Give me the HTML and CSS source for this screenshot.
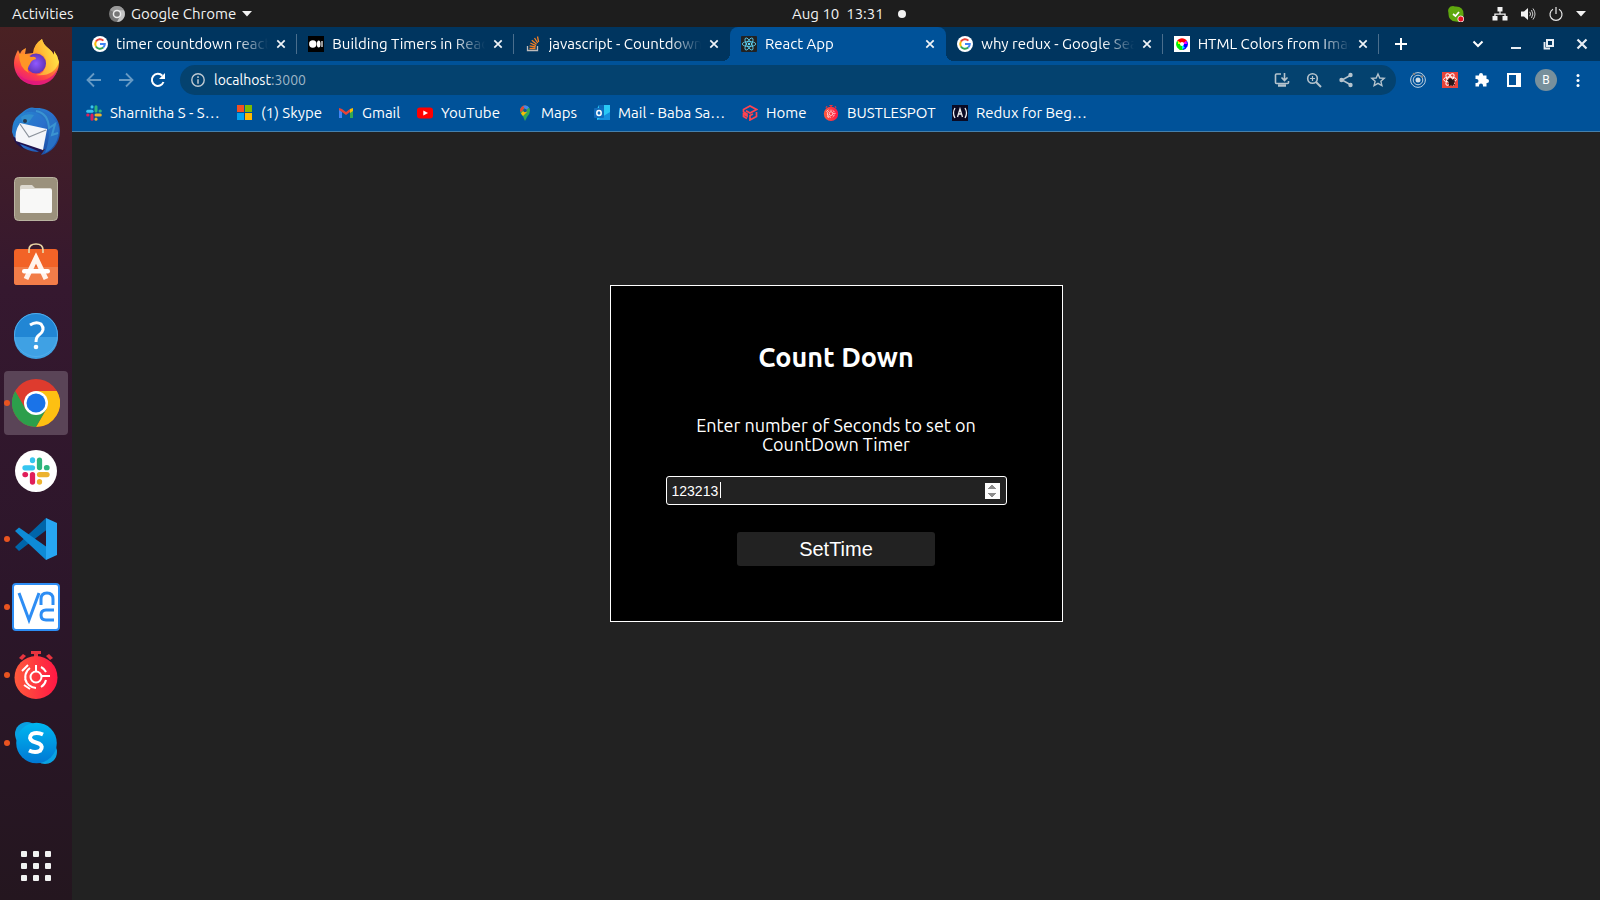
FILE: index.html
```html
<!DOCTYPE html>
<html lang="en">
<head>
<meta charset="utf-8">
<title>React App</title>
<link rel="stylesheet" href="styles.css">
</head>
<body>
<svg class="defs" width="0" height="0" aria-hidden="true">
  <defs>
    <symbol id="google" viewBox="0 0 16 16">
      <circle cx="8" cy="8" r="8" fill="#fff"/>
      <path d="M3.9 5.6A4.8 4.8 0 0 1 11.4 4.6" fill="none" stroke="#ea4335" stroke-width="2"/>
      <path d="M3.9 5.6A4.8 4.8 0 0 0 3.9 10.4" fill="none" stroke="#fbbc05" stroke-width="2"/>
      <path d="M3.9 10.4A4.8 4.8 0 0 0 11.2 11.5" fill="none" stroke="#34a853" stroke-width="2"/>
      <path d="M8 8H12.8A4.8 4.8 0 0 1 11.2 11.5" fill="none" stroke="#4285f4" stroke-width="2"/>
    </symbol>
    <symbol id="close" viewBox="0 0 10 10"><path d="M1.3 1.3L8.7 8.7M8.7 1.3L1.3 8.7" stroke="currentColor" stroke-width="1.7"/></symbol>
    <symbol id="slack" viewBox="0 0 16 16">
      <g stroke-width="3" stroke-linecap="round">
        <path d="M1.7 6.2H6" stroke="#36c5f0"/><path d="M6 1.7V2" stroke="#36c5f0"/>
        <path d="M10 1.8V6" stroke="#2eb67d"/><path d="M14 6.1H14.3" stroke="#2eb67d"/>
        <path d="M10 10H14.3" stroke="#ecb22e"/><path d="M10 14V14.3" stroke="#ecb22e"/>
        <path d="M6 10V14.3" stroke="#e01e5a"/><path d="M1.7 10H2" stroke="#e01e5a"/>
      </g>
    </symbol>
    <symbol id="timer" viewBox="0 0 48 48">
      <path d="M19 0H29V3H26V6H22V3H19ZM7 7L11 3L14 5L10 9ZM41 7L37 3L34 5L38 9Z" fill="#e8343f"/>
      <circle cx="24" cy="26.500" r="21.500" fill="url(#red)"/>
      <g fill="none" stroke="#fff" stroke-width="2">
        <circle cx="24" cy="26" r="5.500"/><path d="M24 20V14M29 25H38M18 17A11 11 0 0 0 15 32M13 28A12 12 0 0 0 24 37M29 16A11 11 0 0 1 34 21M34 29A11 11 0 0 1 29 36M10 20L16 14M12 34L18 38" />
      </g>
    </symbol>
    <linearGradient id="red"><stop stop-color="#ff5a3c"/><stop offset="1" stop-color="#ff1744"/></linearGradient>
    <linearGradient id="fox" x1=".8" y1="0" x2=".3" y2="1"><stop stop-color="#fff44f"/><stop offset=".4" stop-color="#ff9a2e"/><stop offset=".75" stop-color="#ff4047"/><stop offset="1" stop-color="#e31587"/></linearGradient>
    <radialGradient id="violet"><stop stop-color="#9059ff"/><stop offset="1" stop-color="#6134b8"/></radialGradient>
    <linearGradient id="bird" x1="0" y1="0" x2="1" y2="1"><stop stop-color="#2489cf"/><stop offset=".5" stop-color="#2a70cc"/><stop offset="1" stop-color="#153f94"/></linearGradient>
    <linearGradient id="sky" x1="0" y1="0" x2="0" y2="1"><stop stop-color="#00b7f0"/><stop offset="1" stop-color="#0078d4"/></linearGradient>
    <linearGradient id="gold" x1="0" y1="0" x2="1" y2="0"><stop stop-color="#ffa62b"/><stop offset="1" stop-color="#fff04a"/></linearGradient>
  </defs>
</svg>

<header class="topbar">
  <div class="topbar-left">
    <button class="top-item activities">Activities</button>
    <button class="top-item app-menu">
      <svg width="16" height="16" viewBox="0 0 16 16"><circle cx="8" cy="8" r="8" fill="#777"/><path d="M8 8L1 4A8 8 0 0 1 15 4.300Z" fill="#999"/><path d="M8 4.300H15A8 8 0 0 1 8 16L11 10Z" fill="#c4c4c4"/><circle cx="8" cy="8" r="4.300" fill="#eee"/><circle cx="8" cy="8" r="2.800" fill="#777"/></svg>
      <span>Google Chrome</span>
      <svg width="10" height="6" viewBox="0 0 10 6"><path d="M0 0H10L5 5.500Z" fill="#f2f2f2"/></svg>
    </button>
  </div>
  <button class="top-item clock"><time>Aug 10&nbsp; 13:31</time><span class="notice"></span></button>
  <div class="status">
    <svg class="status-skype" width="16" height="16" viewBox="0 0 16 16"><path d="M5 0Q2 0 1 2Q-.5 4 .5 7Q0 15 8 15.500Q16 17 15.500 8Q15.500 0 7 .5Z" fill="#5fa80e"/><path d="M5 8L7.500 10L11 6" fill="none" stroke="#fff" stroke-width="1.700"/><circle cx="12.800" cy="13" r="3" fill="#e81123" stroke="#fff" stroke-width=".8"/></svg>
    <svg width="16" height="14" viewBox="0 0 16 14" fill="#f2f2f2"><path d="M5.500 0H10.500V4.500H8.600V6.500H13.700V9H15.500V13.500H10.500V9H12.400V7.800H3.600V9H5.500V13.500H.5V9H2.300V6.500H7.400V4.500H5.500Z"/></svg>
    <svg width="16" height="14" viewBox="0 0 16 14"><path d="M1 4.500H4L8 1V13L4 9.500H1Z" fill="#f2f2f2"/><path d="M9.700 4.800Q11.500 7 9.700 9.200M11.500 3Q14.200 7 11.500 11M13 1.500Q17 7 13 12.500" fill="none" stroke="#ccc"/></svg>
    <svg width="16" height="16" viewBox="0 0 16 16" fill="none" stroke="#e8e8e8" stroke-width="1.200"><path d="M8 1V8M5 3.200A6 6 0 1 0 11 3.200"/></svg>
    <svg width="10" height="6" viewBox="0 0 10 6"><path d="M0 0H10L5 5.500Z" fill="#f2f2f2"/></svg>
  </div>
</header>

<div class="desktop">
  <nav class="dock" aria-label="Dock">
    <button class="dock-item" aria-label="Firefox">
      <svg width="48" height="48" viewBox="0 0 48 48"><path d="M30 0Q22 5 21 14L13 15L14 9Q9 11 8 15L6 11Q2 18 2 24C2 37 12 46 24.500 46C37 46 47 36 47 23Q46 17 42 12V16Q41 13 36 9Q31 5 30 0Z" fill="url(#fox)"/><path d="M5 33Q10 42 24 42Q40 42 46 29Q42 46 24 46Q10 45 5 33Z" fill="#dc177f" opacity=".75"/><path d="M30 0Q23 5 22 12Q35 14 34 25Q33 35 24 36Q42 38 47 23Q46 17 42 12V16Q40 12 36 9Q31 5 30 0Z" fill="url(#gold)" opacity=".8"/><circle cx="24" cy="24.500" r="10" fill="url(#violet)"/><path d="M7 15Q13 13 19 18Q24 17 24 20Q19 21 18 25Q14 30 17 34Q7 29 7 15Z" fill="#ff9526"/></svg>
    </button>
    <button class="dock-item" aria-label="Thunderbird">
      <svg width="48" height="48" viewBox="0 0 48 48"><path d="M12 4Q18 -1 23 1C38 0 48 11 48 24C48 37 39 46 29 48L33 42L25 45Q5 43 0 25Q0 13 7 8Z" fill="url(#bird)"/><path d="M1 30Q3 38 13 43L8 37Q22 42 30 46L31 36Z" fill="#20134f"/><path d="M8 16L35 22L31 43L4 34Q2 25 8 16Z" fill="#f4f5f9"/><path d="M8 17L17 30L34 23" fill="none" stroke="#8b929c" stroke-width="1.200"/><path d="M12 6Q26 1 34 15Q40 27 33 46Q47 39 47 21Q42 6 24 2Q17 0 12 6Z" fill="#2871c5"/><path d="M24 4Q36 6 37 21L43 17L40 28L46 26" fill="none" stroke="#48acd8" stroke-width="2" opacity=".6"/><path d="M9 10Q14 6 22 8L17 15Q12 19 10 14Z" fill="#328fce"/><circle cx="13" cy="14" r="2" fill="#27384f"/></svg>
    </button>
    <button class="dock-item" aria-label="Files">
      <svg width="48" height="48" viewBox="0 0 48 48"><rect x="2.500" y="2.500" width="43" height="43" rx="4" fill="#9b917c" stroke="#b9b3a0"/><path d="M8 38V12Q8 10 10 10H20L23 13H38Q40 13 40 16V36Q40 38 38 38Z" fill="#ddd9d0"/><rect x="8" y="14" width="32" height="24" rx="2" fill="#f8f8f7"/></svg>
    </button>
    <button class="dock-item" aria-label="Ubuntu Software">
      <svg width="48" height="48" viewBox="0 0 48 48"><rect x="2" y="6" width="44" height="36" rx="3" fill="#f26327"/><path d="M2 24H46V39Q46 42 43 42H5Q2 42 2 39Z" fill="#f27d49"/><path d="M17 10V7Q17 1 24 1T31 7V10" fill="none" stroke="#e9d4a4" stroke-width="1.700"/><path d="M14 36L24 15L34 36" fill="none" stroke="#fff3ec" stroke-width="5"/><rect x="10" y="26" width="28" height="4.500" rx="2.200" fill="#fff"/></svg>
    </button>
    <button class="dock-item" aria-label="Help">
      <svg width="48" height="48" viewBox="0 0 48 48"><circle cx="24" cy="24" r="22" fill="#2186d4"/><path d="M2 26H46A22 22 0 0 1 2 26Z" fill="#3fa1e4"/><circle cx="24" cy="24" r="21.500" fill="none" stroke="#50aceb"/><path d="M18 14Q24 10 29 13Q34 19 27 24Q24 26 24 31" fill="none" stroke="#fff" stroke-width="3"/><circle cx="24" cy="36" r="2.300" fill="#fff"/></svg>
    </button>
    <button class="dock-item running active" aria-label="Google Chrome">
      <svg width="48" height="48" viewBox="0 0 48 48"><circle cx="24" cy="24" r="24" fill="#de3b2e"/><path d="M3.200 12L13.600 30L24 36L24 48A24 24 0 0 1 3.200 12Z" fill="#2c9f4b"/><path d="M24 12H44.800A24 24 0 0 1 24 48L34.400 30Z" fill="#fdc012"/><path d="M24 48L34.400 30L24 35L20 47Z" fill="#2c9f4b"/><circle cx="24" cy="24" r="12" fill="#fff"/><circle cx="24" cy="24" r="9.500" fill="#1a73e8"/></svg>
    </button>
    <button class="dock-item" aria-label="Slack">
      <svg width="48" height="48" viewBox="0 0 48 48"><circle cx="24" cy="24" r="21" fill="#fff"/><svg x="10" y="10" width="28" height="28"><use href="#slack"/></svg></svg>
    </button>
    <button class="dock-item running" aria-label="Visual Studio Code">
      <svg width="48" height="48" viewBox="0 0 48 48"><path d="M3 32L7 36L37 13L34 3Z" fill="#0065a9"/><path d="M3 16L7 12.500L39 35L34 45Z" fill="#0e8bd6"/><path d="M34 3L45 8V40L34 45Z" fill="#27a6f2"/></svg>
    </button>
    <button class="dock-item running" aria-label="VNC Viewer">
      <svg width="48" height="48" viewBox="0 0 48 48"><rect x="1" y="1" width="46" height="46" rx="3" fill="#fff" stroke="#2d8df4" stroke-width="2"/><path d="M7 10L17 37L27 10M29 22V16Q29 10 35 10T41 16V22M42 27H34Q29 27 29 32T34 37H42" fill="none" stroke="#2d8df4" stroke-width="3"/></svg>
    </button>
    <button class="dock-item running" aria-label="Bustlespot"><svg width="48" height="48"><use href="#timer"/></svg></button>
    <button class="dock-item running" aria-label="Skype">
      <svg width="48" height="48" viewBox="0 0 48 48"><circle cx="15" cy="15" r="12" fill="#0a9fe0"/><circle cx="33" cy="33" r="12" fill="#0aa2e2"/><circle cx="24.500" cy="24" r="20.300" fill="url(#sky)"/><path d="M31 15.500Q25 12.800 20 15Q15.500 19 21 22.500L27 24.500Q32 27.500 28 31.800Q23 34.500 17 31.500" fill="none" stroke="#fff" stroke-width="4"/></svg>
    </button>
    <button class="dock-item apps" aria-label="Show Applications">
      <svg width="48" height="48" viewBox="0 0 48 48" fill="#f2f2f2"><rect x="9" y="9" width="6" height="6" rx="1"/><rect x="21" y="9" width="6" height="6" rx="1"/><rect x="33" y="9" width="6" height="6" rx="1"/><rect x="9" y="21" width="6" height="6" rx="1"/><rect x="21" y="21" width="6" height="6" rx="1"/><rect x="33" y="21" width="6" height="6" rx="1"/><rect x="9" y="33" width="6" height="6" rx="1"/><rect x="21" y="33" width="6" height="6" rx="1"/><rect x="33" y="33" width="6" height="6" rx="1"/></svg>
    </button>
  </nav>

  <div class="browser">
    <div class="tabstrip">
      <div class="tabs">
        <div class="tab"><svg width="16" height="16"><use href="#google"/></svg><span class="tab-title">timer countdown react</span><button class="tab-close" aria-label="Close tab"><svg width="10" height="10"><use href="#close"/></svg></button></div>
        <div class="tab"><svg width="16" height="16" viewBox="0 0 16 16"><path d="M0 0H16V16H0Z"/><circle cx="4.800" cy="8" r="3.700" fill="#fff"/><ellipse cx="10.700" cy="8" rx="1.800" ry="3.500" fill="#fff"/><path d="M14 5V11" stroke="#fff" stroke-width="1.200"/></svg><span class="tab-title">Building Timers in React</span><button class="tab-close" aria-label="Close tab"><svg width="10" height="10"><use href="#close"/></svg></button></div>
        <div class="tab"><svg width="16" height="16" viewBox="0 0 16 16" fill="none" stroke-width="1.300"><path d="M2.500 10V14.500H12.500V10" stroke="#bcbbbb"/><path d="M4.500 12.500H10.500M4.600 9.800L10.600 11M5.300 7L11 9.600M6.800 4.300L11.600 8.200M9.500 2L12.700 7M12.500 .5L13.600 6" stroke="#f48024"/></svg><span class="tab-title">javascript - Countdown</span><button class="tab-close" aria-label="Close tab"><svg width="10" height="10"><use href="#close"/></svg></button></div>
        <div class="tab current"><svg width="16" height="16" viewBox="0 0 16 16"><rect width="16" height="16" rx="1" fill="#222"/><g fill="none" stroke="#61dafb" stroke-width=".8"><ellipse cx="8" cy="8" rx="6.800" ry="2.500"/><ellipse cx="8" cy="8" rx="6.800" ry="2.500" transform="rotate(60 8 8)"/><ellipse cx="8" cy="8" rx="6.800" ry="2.500" transform="rotate(120 8 8)"/></g><circle cx="8" cy="8" r="1.200" fill="#61dafb"/></svg><span class="tab-title">React App</span><button class="tab-close" aria-label="Close tab"><svg width="10" height="10"><use href="#close"/></svg></button></div>
        <div class="tab"><svg width="16" height="16"><use href="#google"/></svg><span class="tab-title">why redux - Google Search</span><button class="tab-close" aria-label="Close tab"><svg width="10" height="10"><use href="#close"/></svg></button></div>
        <div class="tab"><svg width="16" height="16" viewBox="0 0 16 16"><path d="M0 0H16V16H0Z" fill="#fff"/><path d="M8 8L3 5A6 6 0 0 1 13 5Z" fill="#f00"/><path d="M8 8L13 5A6 6 0 0 1 9 14Z" fill="#00f"/><path d="M8 8L9 14A6 6 0 0 1 3 5Z" fill="#0e0"/><path d="M8 8L12 5A5 5 0 0 1 13 8Z" fill="#f0f"/><path d="M8 8V13L11 12Z" fill="#0ef"/><path d="M8 8L4 5V8Z" fill="#ff0"/><circle cx="8" cy="8" r="2" fill="#fff"/></svg><span class="tab-title">HTML Colors from Image</span><button class="tab-close" aria-label="Close tab"><svg width="10" height="10"><use href="#close"/></svg></button></div>
      </div>
      <button class="new-tab" aria-label="New tab"><svg width="12" height="12" viewBox="0 0 12 12"><path d="M6 0V12M0 6H12" stroke="#fff" stroke-width="2"/></svg></button>
      <div class="window-controls">
        <button aria-label="Search tabs"><svg width="12" height="12" viewBox="0 0 12 12"><path d="M1.500 3.500L6 8L10.500 3.500" fill="none" stroke="#fff" stroke-width="2"/></svg></button>
        <button aria-label="Minimize"><svg width="12" height="12" viewBox="0 0 12 12"><path d="M1 10H11" stroke="#e8eef4" stroke-width="2"/></svg></button>
        <button aria-label="Restore"><svg width="12" height="12" viewBox="0 0 12 12" fill="none" stroke="#e8eef4" stroke-width="2"><path d="M4 2H10V8H4Z"/><path d="M1.500 4V10.500H7" stroke-width="1.800"/></svg></button>
        <button aria-label="Close window"><svg width="12" height="12" viewBox="0 0 12 12"><path d="M1.500 1.500L10.500 10.500M10.500 1.500L1.500 10.500" stroke="#e8eef4" stroke-width="2.200"/></svg></button>
      </div>
    </div>

    <div class="toolbar">
      <button class="tool faded" aria-label="Back"><svg width="16" height="16" viewBox="0 0 16 16" fill="none" stroke="currentColor" stroke-width="1.800"><path d="M15 8H2M8 1.500L1.500 8L8 14.500"/></svg></button>
      <button class="tool faded" aria-label="Forward"><svg width="16" height="16" viewBox="0 0 16 16" fill="none" stroke="currentColor" stroke-width="1.800"><path d="M1 8H14M8 1.500L14.500 8L8 14.500"/></svg></button>
      <button class="tool" aria-label="Reload"><svg width="16" height="16" viewBox="0 0 16 16"><path d="M13.500 10A6 6 0 1 1 12.300 3.800" fill="none" stroke="#fff" stroke-width="2"/><path d="M15 1V7H9Z" fill="#fff"/></svg></button>
      <div class="omnibox">
        <svg class="info" width="14" height="14" viewBox="0 0 14 14"><circle cx="7" cy="7" r="6.200" fill="none" stroke="#c0cad2" stroke-width="1.400"/><path d="M7 3.300V5M7 6.200V10.700" stroke="#c0cad2" stroke-width="1.500"/></svg>
        <a class="address" href="#">localhost<span class="port">:3000</span></a>
        <button class="tool" aria-label="Install"><svg width="16" height="16" viewBox="0 0 16 16" fill="none" stroke="#b5c3cd" stroke-width="1.600"><path d="M7 2H2.500Q1.500 2 1.500 3V10.500Q1.500 11.500 2.500 11.500H13.500Q14.500 11.500 14.500 10.500V9M10.500 1V8M7.500 5.500L10.500 8.500L13.500 5.500"/><path d="M4 13.500H12" stroke-width="2.500"/></svg></button>
        <button class="tool" aria-label="Zoom"><svg width="16" height="16" viewBox="0 0 16 16" fill="none" stroke="#b5c3cd" stroke-width="1.600"><circle cx="6.500" cy="6.500" r="4.800"/><path d="M10 10L15 15" stroke-width="2"/><path d="M6.500 4V9M4 6.500H9" stroke-width="1.200"/></svg></button>
        <button class="tool" aria-label="Share"><svg width="16" height="16" viewBox="0 0 16 16"><path d="M13 3L4 8L13 13" fill="none" stroke="#b5c3cd" stroke-width="1.500"/><g fill="#b5c3cd"><circle cx="12.500" cy="3" r="2.200"/><circle cx="3.500" cy="8" r="2.200"/><circle cx="12.500" cy="13" r="2.200"/></g></svg></button>
        <button class="tool" aria-label="Bookmark"><svg width="16" height="16" viewBox="0 0 16 16"><path d="M8 2L9.800 6L14.200 6.400L10.900 9.300L11.900 13.600L8 11.300L4.100 13.600L5.100 9.300L1.800 6.400L6.200 6Z" fill="none" stroke="#b5c3cd" stroke-width="1.400"/></svg></button>
      </div>
      <button class="tool" aria-label="Extension"><svg width="16" height="16" viewBox="0 0 16 16"><g fill="none" stroke="#bfd0e0"><circle cx="8" cy="8" r="7.400"/><circle cx="8" cy="8" r="4.800"/></g><circle cx="8" cy="8" r="2.500" fill="#cfdde9"/><circle cx="4" cy="2" r="1.300" fill="#888"/><circle cx="12" cy="4.500" r="1.200" fill="#888"/></svg></button>
      <button class="tool" aria-label="React Developer Tools"><svg width="16" height="16" viewBox="0 0 16 16"><path d="M0 0H16V16H0Z" fill="#e8443a"/><g fill="none" stroke="#fff"><ellipse cx="8" cy="7.500" rx="6.500" ry="2.500"/><ellipse cx="8" cy="7.500" rx="6.500" ry="2.500" transform="rotate(60 8 7.500)"/><ellipse cx="8" cy="7.500" rx="6.500" ry="2.500" transform="rotate(120 8 7.500)"/></g><path d="M6 8L8 6L13 9L11 14L7 13Z" fill="#26191a"/><path d="M5 8L13 13M12 7L7 14" stroke="#26191a"/></svg></button>
      <button class="tool" aria-label="Extensions"><svg width="16" height="16" viewBox="0 0 16 16"><path d="M1.500 3.500H5V3A2 2 0 0 1 9 3V3.500H12.500V7H13A2 2 0 0 1 13 11H12.500V14.500H9V13.500A2 2 0 0 0 5 13.500V14.500H1.500V11H2.500A2 2 0 0 0 2.500 7H1.500Z" fill="#fff"/></svg></button>
      <button class="tool" aria-label="Side panel"><svg width="16" height="16" viewBox="0 0 16 16"><path d="M2 2H14V14H2Z" fill="none" stroke="#fff" stroke-width="2"/><path d="M10 2H15V14H10Z" fill="#fff"/></svg></button>
      <button class="tool" aria-label="Profile"><span class="avatar">B</span></button>
      <button class="tool" aria-label="Menu"><svg width="16" height="16" viewBox="0 0 16 16" fill="#fff"><circle cx="8" cy="3.500" r="1.500"/><circle cx="8" cy="8.500" r="1.500"/><circle cx="8" cy="13.500" r="1.500"/></svg></button>
    </div>

    <nav class="bookmarks" aria-label="Bookmarks">
      <a class="bookmark" href="#"><svg width="16" height="16"><use href="#slack"/></svg>Sharnitha S - S…</a>
      <a class="bookmark" href="#"><svg width="16" height="16" viewBox="0 0 16 16"><path d="M0 0H7V7H0Z" fill="#f25022"/><path d="M8 0H15V7H8Z" fill="#7fba00"/><path d="M0 8H7V15H0Z" fill="#00a4ef"/><path d="M8 8H15V15H8Z" fill="#ffb900"/></svg>(1) Skype</a>
      <a class="bookmark" href="#"><svg width="16" height="16" viewBox="0 0 16 16"><path d="M1 4V13H4V7Z" fill="#4285f4"/><path d="M15 4V13H12V7Z" fill="#34a853"/><path d="M12 4L15 3V6L12 8Z" fill="#fbbc04"/><path d="M4 7L8 10L12 7V4L8 7L4 4L1 3V5Z" fill="#ea4335"/></svg>Gmail</a>
      <a class="bookmark" href="#"><svg width="16" height="16" viewBox="0 0 16 16"><rect y="2.500" width="16" height="11" rx="3" fill="#f00"/><path d="M6.300 5.500L11 8L6.300 10.500Z" fill="#fff"/></svg>YouTube</a>
      <a class="bookmark" href="#"><svg width="16" height="16" viewBox="0 0 16 16"><path d="M3 5.500A5 5 0 0 1 13 5.500Q13 9 10 12L8 16Q7 12 4.500 9.500Q3 8 3 5.500Z" fill="#34a853"/><path d="M3 5.500A5 5 0 0 1 9 .7L4 7.500Z" fill="#ea4335"/><path d="M6 1A5 5 0 0 1 12 2.500L9 5Z" fill="#4285f4"/><path d="M4 8.500L7 5L10 7L6 11Z" fill="#fbbc04"/><circle cx="8" cy="5.500" r="1.800" fill="#17549b"/></svg>Maps</a>
      <a class="bookmark" href="#"><svg width="16" height="16" viewBox="0 0 16 16"><path d="M5 0H16V15H3V4Z" fill="#28c8f5"/><path d="M5 0H10V4H5Z" fill="#0c68b8"/><path d="M3 15L16 7V15Z" fill="#1490df"/><rect y="3" width="10" height="10" rx="1" fill="#0f6cbd"/><ellipse cx="5" cy="8" rx="2.200" ry="2.500" fill="none" stroke="#fff" stroke-width="1.500"/></svg>Mail - Baba Sa…</a>
      <a class="bookmark" href="#"><svg width="16" height="16" viewBox="0 0 16 16" fill="none" stroke="#ff4350" stroke-width="1.700"><path d="M1.500 7V4.500L8 1L14.500 4.500L8 8L4 5.800M14.500 7V11.500L8 15V10.500L11 9M1.500 7L5 9V11L1.500 9V11.500L5 13.500"/></svg>Home</a>
      <a class="bookmark" href="#"><svg width="16" height="16"><use href="#timer"/></svg>BUSTLESPOT</a>
      <a class="bookmark" href="#"><svg width="16" height="16" viewBox="0 0 16 16"><path d="M0 0H16V16H0Z" fill="#0a0a23"/><path d="M3 3Q0 8 3 13M13 3Q16 8 13 13M5.500 12L8 4L10.500 12M6.500 9H9.500" fill="none" stroke="#eee" stroke-width="1.300"/></svg>Redux for Beg…</a>
    </nav>

    <main class="page">
      <form class="card">
        <h1 class="heading">Count Down</h1>
        <label class="prompt" for="seconds">Enter number of Seconds to set on CountDown Timer</label>
        <div class="field">
          <input class="seconds" id="seconds" type="number" value="123213" autofocus>
          <span class="caret"></span>
        </div>
        <button class="set-time" type="button">SetTime</button>
      </form>
    </main>
  </div>
</div>
</body>
</html>
```
FILE: styles.css
```css
* { box-sizing: border-box; }

body {
  margin: 0;
  min-height: 100vh;
  display: flex;
  flex-direction: column;
  background: #222;
  color: #fff;
  font: 15px/20px Ubuntu, "Noto Sans", sans-serif;
}

button {
  padding: 0;
  border: 0;
  background: none;
  color: inherit;
  font: inherit;
}

a { color: inherit; text-decoration: none; }
svg { display: block; flex: none; }
.defs { position: absolute; }

.topbar {
  display: grid;
  grid-template-columns: 49.5% auto 1fr;
  align-items: center;
  height: 27px;
  background: #1d1d1d;
  color: #f2f2f2;
}
.topbar-left, .top-item, .status { display: flex; align-items: center; }
.activities { padding-left: 12px; width: 109px; }
.app-menu { gap: 6px; }
.clock { gap: 14px; }
.notice { width: 8px; height: 8px; border-radius: 50%; background: #f2f2f2; }
.status { justify-content: flex-end; gap: 12px; padding-right: 14px; }
.status-skype { margin-right: 16px; }

.desktop { flex: 1; display: flex; }

.dock {
  flex: none;
  display: flex;
  flex-direction: column;
  gap: 4px;
  width: 72px;
  padding: 4px 4px 2px;
  background: linear-gradient(#4a2123, #35182f 30%, #2c162a 65%, #24161f);
}
.dock-item {
  position: relative;
  display: grid;
  place-items: center;
  height: 64px;
  border-radius: 4px;
}
.dock-item.active { background: #5a4457; }
.dock-item.running::before {
  content: "";
  position: absolute;
  left: 0;
  width: 6px;
  height: 6px;
  border-radius: 50%;
  background: #e95420;
}
.apps { margin-top: auto; }

.browser { flex: 1; min-width: 0; display: flex; flex-direction: column; }

.tabstrip {
  display: flex;
  align-items: stretch;
  height: 34px;
  padding-left: 9px;
  background: #00355f;
}
.tabs { flex: 0 1 1298px; min-width: 0; display: flex; }
.tab {
  position: relative;
  flex: 1 1 0;
  min-width: 0;
  display: flex;
  align-items: center;
  gap: 8px;
  padding: 0 11px;
}
.tab::after {
  content: "";
  position: absolute;
  right: 0;
  top: 7px;
  width: 1px;
  height: 20px;
  background: #4a6e8d;
}
.tab.current::after, .tab:has(+ .current)::after { display: none; }
.tab.current {
  border-radius: 8px 8px 0 0;
  background: #005299;
}
.tab.current::before {
  content: "";
  position: absolute;
  left: -8px;
  right: -8px;
  bottom: 0;
  height: 8px;
  background:
    radial-gradient(circle at 0 0, transparent 8px, #005299 8px) left / 8px 8px no-repeat,
    radial-gradient(circle at 100% 0, transparent 8px, #005299 8px) right / 8px 8px no-repeat;
}
.tab-title {
  flex: 1;
  min-width: 0;
  overflow: hidden;
  white-space: nowrap;
  -webkit-mask-image: linear-gradient(90deg, #000 calc(100% - 32px), transparent);
  mask-image: linear-gradient(90deg, #000 calc(100% - 32px), transparent);
}
.tab-close { color: #f0f4f8; }
.new-tab { display: grid; place-items: center; width: 44px; }
.window-controls { display: flex; margin-left: auto; padding-right: 2px; }
.window-controls button { display: grid; place-items: center; width: 33px; }
.window-controls button:first-child { width: 42px; }

.toolbar {
  display: flex;
  align-items: center;
  height: 38px;
  padding: 0 6px;
  background: #005299;
}
.tool { flex: none; display: grid; place-items: center; width: 32px; height: 30px; }
.faded { color: #669ac4; }
.omnibox {
  flex: 1;
  min-width: 0;
  display: flex;
  align-items: center;
  height: 30px;
  margin: 0 6px;
  padding: 0 2px 0 11px;
  border-radius: 15px;
  background: #04426f;
}
.address { flex: 1; margin-left: 9px; font-size: 14px; }
.port { color: #9db5c6; }
.avatar {
  width: 22px;
  height: 22px;
  border-radius: 50%;
  background: #78909c;
  font: 12px/22px Roboto, sans-serif;
  text-align: center;
}

.bookmarks {
  display: grid;
  grid-template-columns: 151px 101px 79px 100px 77px 148px 81px 129px auto;
  align-items: center;
  height: 33px;
  padding: 0 14px 4px;
  border-bottom: 1px solid #4680ab;
  background: #005299;
}
.bookmark { display: flex; align-items: center; gap: 8px; white-space: nowrap; }

.page { flex: 1; padding: 153px 16px 16px; background: #222; }
.card {
  display: flex;
  flex-direction: column;
  align-items: center;
  max-width: 453px;
  margin: 0 auto;
  padding: 55px;
  border: 1px solid #fff;
  background: #000;
}
.heading { margin: 0; font-size: 27px; line-height: 32px; font-weight: 700; }
.prompt {
  margin: 43px 0 22px;
  font-size: 18px;
  line-height: 19px;
  text-align: center;
}
.field { position: relative; width: 100%; }
.seconds {
  display: block;
  width: 100%;
  height: 29px;
  padding: 0 6px 0 5px;
  border: 1px solid #fff;
  border-radius: 3px;
  outline: 0;
  background: #222;
  color: #fff;
  caret-color: transparent;
  font: 14px "Liberation Sans", Arial, sans-serif;
}
.seconds::-webkit-inner-spin-button { opacity: 1; }
.caret {
  position: absolute;
  left: 54px;
  top: 6px;
  width: 1px;
  height: 16px;
  background: #fff;
}
.set-time {
  width: 198px;
  height: 34px;
  margin-top: 27px;
  border-radius: 3px;
  background: #222;
  font: 20px "Liberation Sans", Arial, sans-serif;
}
```
